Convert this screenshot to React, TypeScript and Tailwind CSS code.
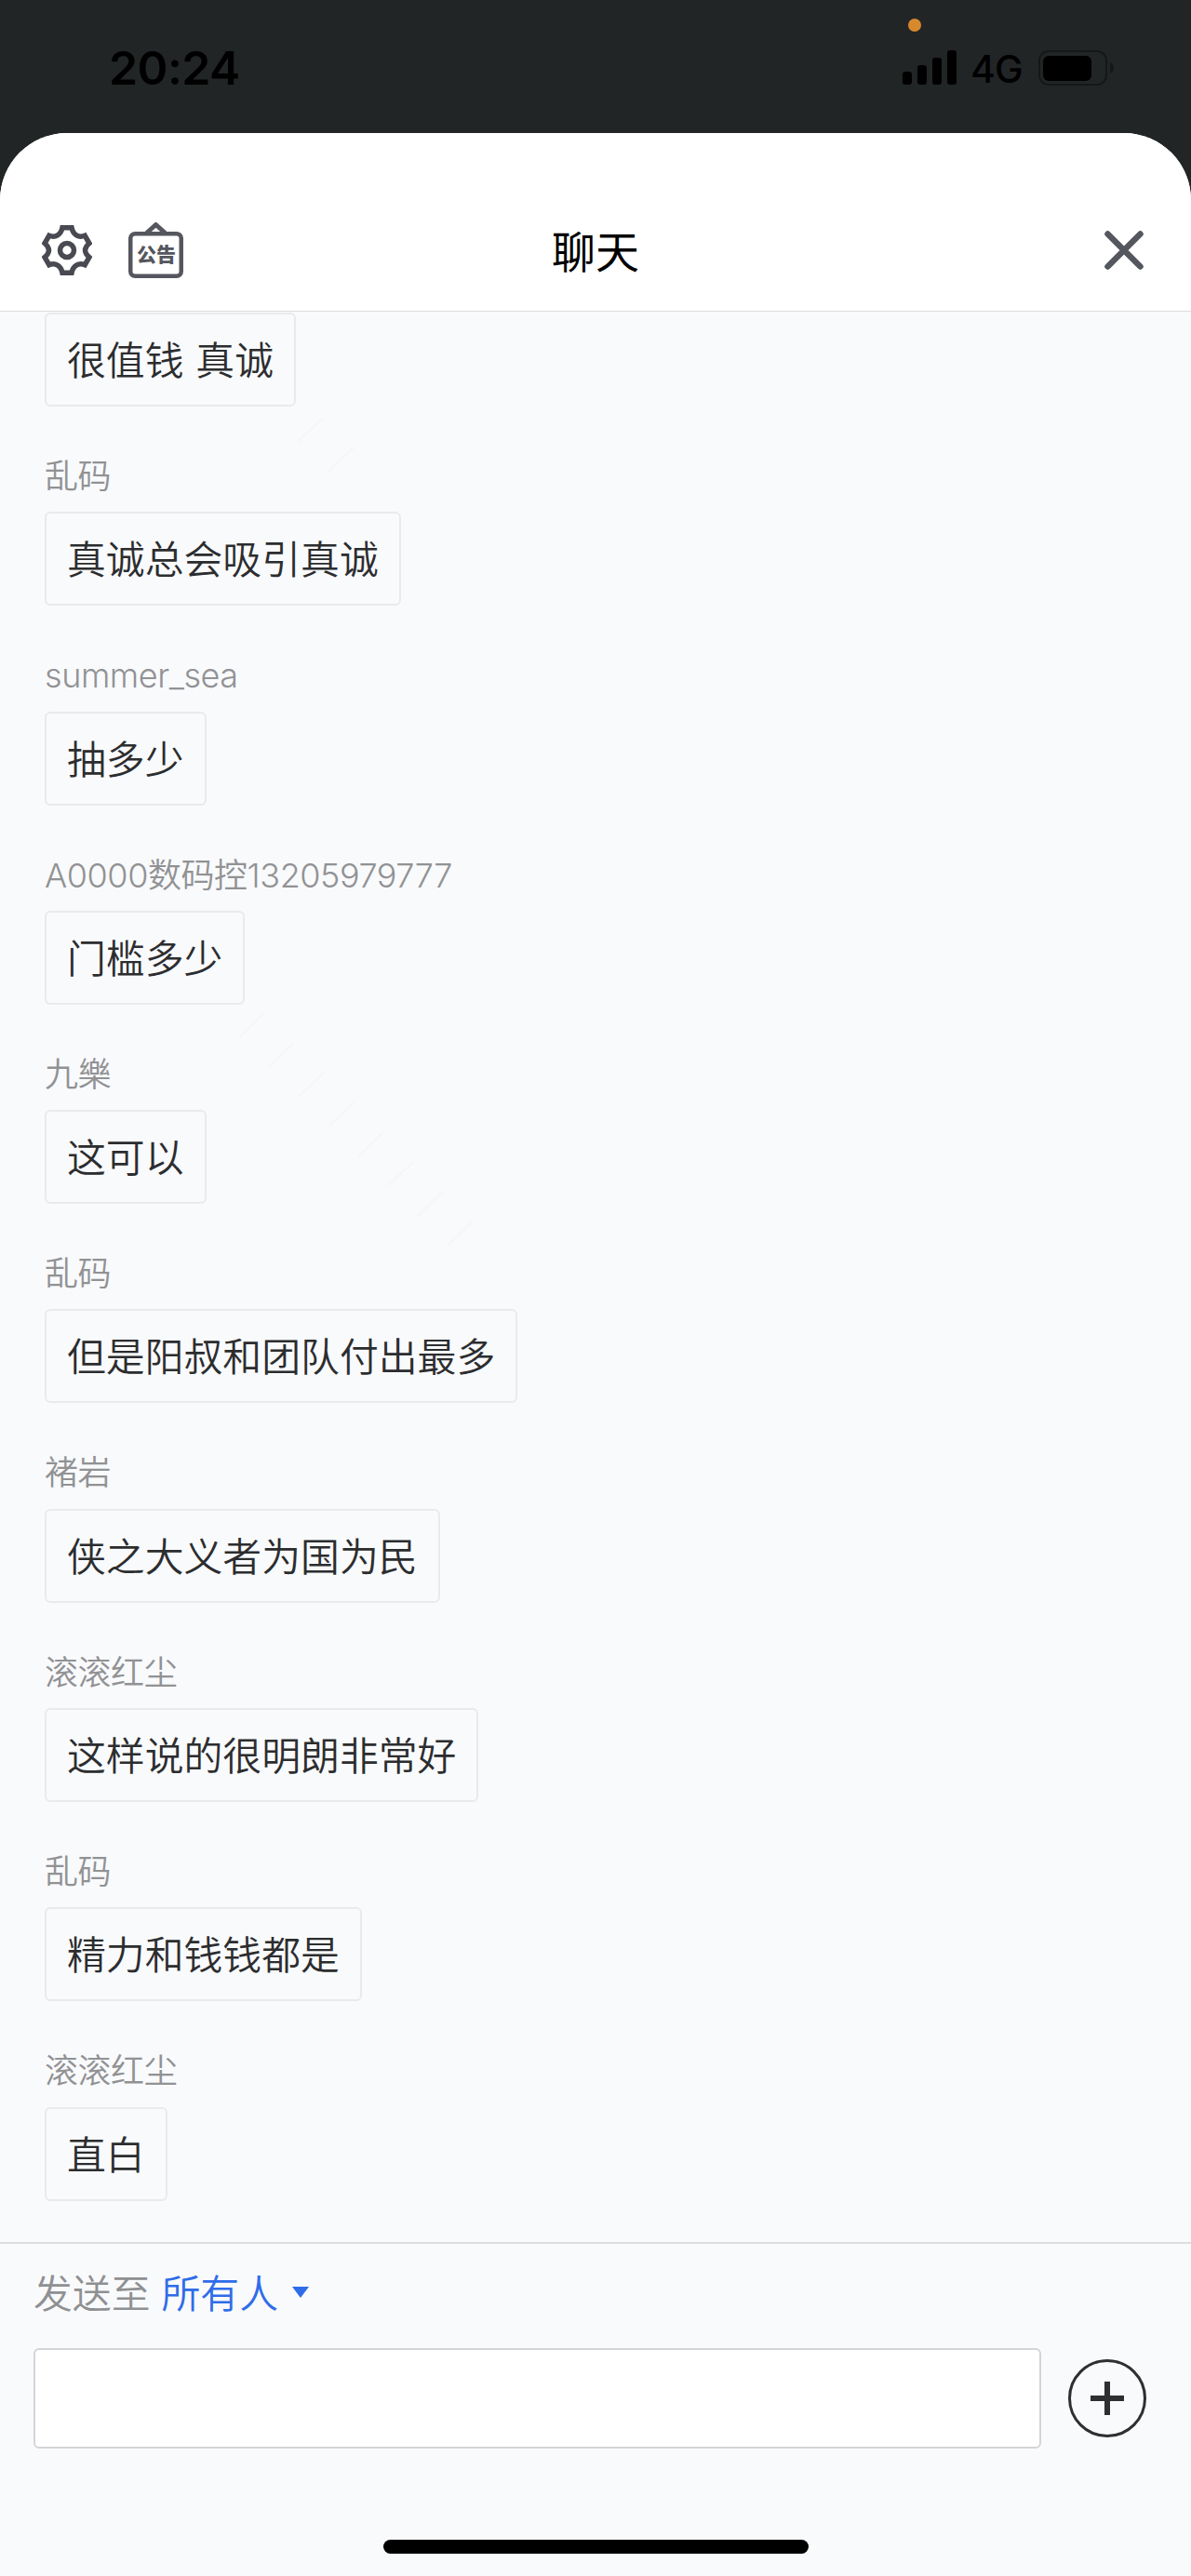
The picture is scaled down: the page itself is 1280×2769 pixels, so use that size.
import { clsx } from 'clsx';

type Message = {
  name?: string;
  text: string;
};

const messages: Message[] = [
  { text: '很值钱 真诚' },
  { name: '乱码', text: '真诚总会吸引真诚' },
  { name: 'summer_sea', text: '抽多少' },
  { name: 'A0000数码控13205979777', text: '门槛多少' },
  { name: '九樂', text: '这可以' },
  { name: '乱码', text: '但是阳叔和团队付出最多' },
  { name: '褚岩', text: '侠之大义者为国为民' },
  { name: '滚滚红尘', text: '这样说的很明朗非常好' },
  { name: '乱码', text: '精力和钱钱都是' },
  { name: '滚滚红尘', text: '直白' },
];

function StatusBar() {
  return (
    <div className="relative flex h-[143px] items-start justify-between bg-[#222526] pt-[44px] pr-[82px] pl-[117px] text-black">
      <span className="absolute top-[20px] left-[976px] size-[14px] rounded-full bg-[#d78a2d]" />
      <span className="text-[50px] leading-[58px] font-semibold tracking-[-0.6px]">20:24</span>
      <div className="flex h-[58px] items-center">
        <svg width="58" height="38" viewBox="0 0 58 38" fill="currentColor">
          <rect x="0" y="23" width="10" height="14" rx="3" />
          <rect x="16" y="16" width="10" height="21" rx="3" />
          <rect x="32" y="8" width="10" height="29" rx="3" />
          <rect x="48" y="0" width="10" height="37" rx="3" />
        </svg>
        <span className="mt-[2px] ml-[15px] w-[57px] text-[41px] leading-[58px] font-medium tracking-[-1px] whitespace-nowrap">
          4G
        </span>
        <svg className="ml-[16px]" width="82" height="38" viewBox="0 0 82 38" fill="none">
          <rect x="1" y="1" width="72" height="36" rx="10" stroke="#151718" strokeWidth="2" />
          <rect x="5" y="6" width="52" height="27" rx="6" fill="#000" />
          <path d="M77 13c2.500 1.500 4 3.500 4 6s-1.500 4.500-4 6z" fill="#151718" />
        </svg>
      </div>
    </div>
  );
}

function GearIcon() {
  return (
    <svg width="54" height="54" viewBox="0 0 54 54" fill="none" stroke="#484951" strokeWidth="5.500">
      <path
        strokeLinejoin="miter"
        d="M22 2.800H32C33.500 10.500 39.500 14 46.200 11.300L51 19.500C45 24.500 45 29.500 51 34.500L46.200 42.700C39.500 40 33.500 43.500 32 51.200H22C20.500 43.500 14.500 40 7.800 42.700L3 34.500C9 29.500 9 24.500 3 19.500L7.800 11.300C14.500 14 20.500 10.500 22 2.800Z"
      />
      <circle cx="27" cy="27" r="7.500" />
    </svg>
  );
}

function NoticeIcon() {
  return (
    <div className="relative ml-[39px] h-[60px] w-[59px]">
      <svg width="59" height="60" viewBox="0 0 59 60" fill="none" stroke="#55565e" strokeWidth="4.500">
        <rect x="2.250" y="12.250" width="54.500" height="45.500" rx="5" />
        <path d="M19.500 11.500L29.500 2.500L39.500 11.500" strokeWidth="5" strokeLinejoin="round" />
      </svg>
      <span className="absolute top-[22px] left-[9px] text-[21px] leading-[26px] font-black whitespace-nowrap text-[#55565e]">
        公告
      </span>
    </div>
  );
}

function Header() {
  return (
    <header className="flex h-[192px] items-end justify-between border-b border-[#dcdde0] bg-white pr-[51px] pb-[35px] pl-[45px]">
      <div className="flex w-[200px] items-center">
        <GearIcon />
        <NoticeIcon />
      </div>
      <h1 className="translate-y-[2px] text-[47px] leading-[60px] text-black">聊天</h1>
      <div className="flex h-[60px] w-[194px] items-center justify-end">
        <svg width="42" height="42" viewBox="0 0 42 42" stroke="#55575f" strokeWidth="6.500" strokeLinecap="round">
          <path d="M3.500 3.500L38.500 38.500M38.500 3.500L3.500 38.500" />
        </svg>
      </div>
    </header>
  );
}

function ChatMessage({ name, text }: Message) {
  return (
    <div className={clsx('flex flex-col items-start', name ? 'h-[214.3px]' : 'h-[101px]')}>
      {name && (
        <div className="mt-[49px] mb-[12.300px] h-[52px] text-[36px] leading-[52px] font-[350] tracking-[-0.450px] text-[#919294]">
          {name}
        </div>
      )}
      <div className="h-[101px] rounded-[6px] border-2 border-[#e9eaec] px-[22px] pt-[1px] text-[41.850px] leading-[98px] font-[350] [word-spacing:1px] whitespace-nowrap text-[#2c2d2f]">
        {text}
      </div>
    </div>
  );
}

// Faint diagonal ticks behind the conversation
function Watermark() {
  return (
    <svg
      className="pointer-events-none absolute top-0 left-0"
      width="600"
      height="1100"
      viewBox="0 335 600 1100"
      stroke="#f5f6f8"
      strokeWidth="2"
    >
      <path d="M320 475L347 449M353 507L380 481" />
      {Array.from({ length: 8 }, (_, i) => (
        <path key={i} d={`M${257 + i * 32} ${1115 + i * 32}l27 -26`} />
      ))}
    </svg>
  );
}

function Composer() {
  return (
    <footer className="h-[359px] border-t-2 border-[#dddee1] px-[36px] pt-[24px]">
      <div className="flex h-[60px] items-center text-[41.850px] leading-[60px] font-[350]">
        <span className="text-[#8f9092]">发送至</span>
        <button className="ml-[12px] flex items-center text-[#2f6cea]">
          所有人
          <svg className="-mt-[4px] ml-[15px]" width="18" height="12" viewBox="0 0 18 12" fill="currentColor">
            <path d="M0 0H18L9 12Z" />
          </svg>
        </button>
      </div>
      <div className="mt-[28px] flex items-center gap-[29px]">
        <input className="h-[108px] w-[1083px] rounded-[6px] border-2 border-[#d3d4d7] bg-white px-6 text-[42px] outline-none" />
        <button aria-label="更多">
          <svg width="84" height="84" viewBox="0 0 84 84" fill="none" stroke="#2d2f31">
            <circle cx="42" cy="42" r="40.500" strokeWidth="3" />
            <path d="M24 42H60M42 24V60" strokeWidth="6" />
          </svg>
        </button>
      </div>
      <div className="mx-auto mt-[98px] h-[15px] w-[457px] rounded-full bg-black" />
    </footer>
  );
}

export default function App() {
  return (
    <div className="h-[2769px] w-[1280px] overflow-hidden bg-[#222526] font-['Inter','Noto_Sans_CJK_SC',sans-serif]">
      <StatusBar />
      <div className="overflow-hidden rounded-t-[72px] bg-[#f9fafc]">
        <Header />
        <main className="relative h-[2075px] overflow-hidden px-[48px] pt-[1px]">
          <Watermark />
          {messages.map((message, index) => (
            <ChatMessage key={index} {...message} />
          ))}
        </main>
        <Composer />
      </div>
    </div>
  );
}
